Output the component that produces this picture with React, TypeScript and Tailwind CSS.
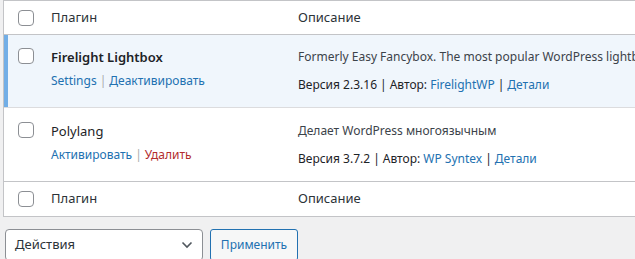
const font = { fontFamily: '"Noto Sans", "Open Sans", sans-serif' };

function Check() {
  return <span className="block w-4 h-4 rounded-[4px] border border-[#8c8f94] bg-white" />;
}

function Sep({ light }: { light?: boolean }) {
  return <span className={light ? "text-[#a7aaad] px-[3px]" : "text-[#1d2327] px-[3px]"}>|</span>;
}

function HeadRow({ top }: { top?: boolean }) {
  return (
    <div className={`flex items-center ${top ? "h-[34px] border-b border-[#c3c4c7]" : "h-[35px] border-t border-[#c3c4c7]"} bg-white`}>
      <div className="w-[47px] shrink-0 pl-[14px]">
        <Check />
      </div>
      <div className="w-[247px] shrink-0 text-[13px] text-[#2c3338]">Плагин</div>
      <div className="text-[13px] text-[#2c3338]">Описание</div>
    </div>
  );
}

export default function App() {
  return (
    <div className="w-[635px] h-[259px] overflow-hidden bg-[#f0f0f1] pl-[3px]" style={font}>
      <div className="w-[700px] border-l border-y border-[#c3c4c7]">
        <HeadRow top />

        {/* active plugin */}
        <div className="flex h-[73px] bg-[#f0f6fc] border-b border-[#dcdcde]">
          <div className="w-[47px] shrink-0 pl-[10px] border-l-4 border-[#72aee6] pt-[13px]">
            <Check />
          </div>
          <div className="w-[247px] shrink-0 pt-[12px]">
            <div className="text-[13px] leading-[20px] font-semibold text-[#1d2327]">Firelight Lightbox</div>
            <div className="mt-[4px] text-[12px] leading-[20px] text-[#2271b1]">
              Settings<Sep light />Деактивировать
            </div>
          </div>
          <div className="pt-[12px] text-[12px] leading-[20px] text-[#3c434a] whitespace-nowrap">
            <div>Formerly Easy Fancybox. The most popular WordPress lightbox</div>
            <div className="mt-[8px] text-[#1d2327]">
              Версия 2.3.16<Sep />Автор: <span className="text-[#2271b1]">FirelightWP</span><Sep />
              <span className="text-[#2271b1]">Детали</span>
            </div>
          </div>
        </div>

        {/* inactive plugin */}
        <div className="flex h-[73px] bg-white">
          <div className="w-[47px] shrink-0 pl-[14px] pt-[14px]">
            <Check />
          </div>
          <div className="w-[247px] shrink-0 pt-[13px]">
            <div className="text-[13px] leading-[20px] text-[#1d2327]">Polylang</div>
            <div className="mt-[4px] text-[12px] leading-[20px]">
              <span className="text-[#2271b1]">Активировать</span><Sep light />
              <span className="text-[#b32d2e]">Удалить</span>
            </div>
          </div>
          <div className="pt-[13px] text-[12px] leading-[20px] text-[#3c434a] whitespace-nowrap">
            <div>Делает WordPress многоязычным</div>
            <div className="mt-[8px] text-[#1d2327]">
              Версия 3.7.2<Sep />Автор: <span className="text-[#2271b1]">WP Syntex</span><Sep />
              <span className="text-[#2271b1]">Детали</span>
            </div>
          </div>
        </div>

        <HeadRow />
      </div>

      <div className="flex gap-[7px] mt-[12px] ml-[2px]">
        <div className="w-[198px] h-[32px] flex items-center justify-between pl-[9px] pr-[9px] bg-white border border-[#8c8f94] rounded-[4px] text-[13px] text-[#2c3338]">
          <span>Действия</span>
          <svg width="12" height="8" viewBox="0 0 12 8" fill="none">
            <path d="M1.5 1.5 6 6l4.5-4.5" stroke="#50575e" strokeWidth="1.6" />
          </svg>
        </div>
        <div className="w-[88px] h-[32px] flex items-center justify-center bg-[#f6f7f7] border border-[#2271b1] rounded-[3px] text-[12px] text-[#2271b1]">
          Применить
        </div>
      </div>
    </div>
  );
}
